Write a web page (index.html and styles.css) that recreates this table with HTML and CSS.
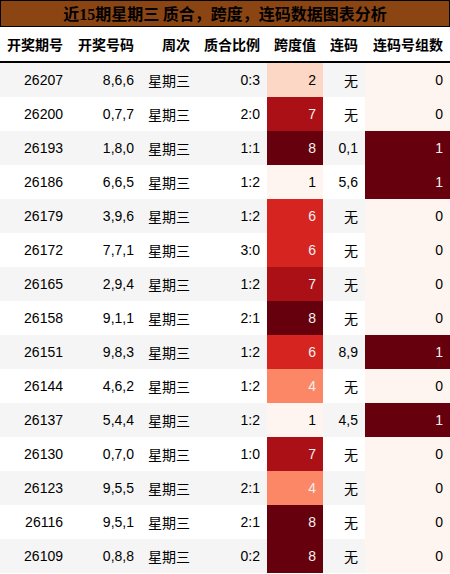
FILE: index.html
```html
<!DOCTYPE html>
<html lang="zh">
<head>
<meta charset="utf-8">
<link rel="stylesheet" href="styles.css">
</head>
<body>
<div class="title">近<span class="num">15</span>期星期三 质合，跨度，连码数据图表分析</div>
<table class="grid">
  <colgroup>
    <col class="c1"><col class="c2"><col class="c3"><col class="c4"><col class="c5"><col class="c6"><col class="c7">
  </colgroup>
  <thead>
    <tr><th>开奖期号</th><th>开奖号码</th><th>周次</th><th>质合比例</th><th>跨度值</th><th>连码</th><th>连码号组数</th></tr>
  </thead>
  <tbody>
    <tr><td>26207</td><td>8,6,6</td><td>星期三</td><td>0:3</td><td class="s2">2</td><td>无</td><td class="g0">0</td></tr>
    <tr><td>26200</td><td>0,7,7</td><td>星期三</td><td>2:0</td><td class="s7">7</td><td>无</td><td class="g0">0</td></tr>
    <tr><td>26193</td><td>1,8,0</td><td>星期三</td><td>1:1</td><td class="s8">8</td><td>0,1</td><td class="g1">1</td></tr>
    <tr><td>26186</td><td>6,6,5</td><td>星期三</td><td>1:2</td><td class="s1">1</td><td>5,6</td><td class="g1">1</td></tr>
    <tr><td>26179</td><td>3,9,6</td><td>星期三</td><td>1:2</td><td class="s6">6</td><td>无</td><td class="g0">0</td></tr>
    <tr><td>26172</td><td>7,7,1</td><td>星期三</td><td>3:0</td><td class="s6">6</td><td>无</td><td class="g0">0</td></tr>
    <tr><td>26165</td><td>2,9,4</td><td>星期三</td><td>1:2</td><td class="s7">7</td><td>无</td><td class="g0">0</td></tr>
    <tr><td>26158</td><td>9,1,1</td><td>星期三</td><td>2:1</td><td class="s8">8</td><td>无</td><td class="g0">0</td></tr>
    <tr><td>26151</td><td>9,8,3</td><td>星期三</td><td>1:2</td><td class="s6">6</td><td>8,9</td><td class="g1">1</td></tr>
    <tr><td>26144</td><td>4,6,2</td><td>星期三</td><td>1:2</td><td class="s4">4</td><td>无</td><td class="g0">0</td></tr>
    <tr><td>26137</td><td>5,4,4</td><td>星期三</td><td>1:2</td><td class="s1">1</td><td>4,5</td><td class="g1">1</td></tr>
    <tr><td>26130</td><td>0,7,0</td><td>星期三</td><td>1:0</td><td class="s7">7</td><td>无</td><td class="g0">0</td></tr>
    <tr><td>26123</td><td>9,5,5</td><td>星期三</td><td>2:1</td><td class="s4">4</td><td>无</td><td class="g0">0</td></tr>
    <tr><td>26116</td><td>9,5,1</td><td>星期三</td><td>2:1</td><td class="s8">8</td><td>无</td><td class="g0">0</td></tr>
    <tr><td>26109</td><td>0,8,8</td><td>星期三</td><td>0:2</td><td class="s8">8</td><td>无</td><td class="g0">0</td></tr>
  </tbody>
</table>
</body>
</html>
```
FILE: styles.css
```css
html, body {
  margin: 0;
  padding: 0;
  background: #ffffff;
}
body {
  width: 450px;
  font-family: "Liberation Sans", Arial, "Noto Sans CJK SC", sans-serif;
  color: #000;
}
.title {
  box-sizing: border-box;
  width: 450px;
  height: 27px;
  border: 1px solid #000;
  background: #8b4513;
  color: #000;
  font-family: "Noto Sans CJK SC", sans-serif;
  font-weight: bold;
  font-size: 16px;
  line-height: 24px;
  text-align: center;
}
.title .num {
  font-family: "Liberation Serif", "Times New Roman", serif;
  font-weight: bold;
}
.grid {
  width: 450px;
  table-layout: fixed;
  border-collapse: collapse;
  border-spacing: 0;
  font-size: 14px;
}
.c1 { width: 70px; }
.c2 { width: 71px; }
.c3 { width: 56px; }
.c4 { width: 70px; }
.c5 { width: 56px; }
.c6 { width: 42px; }
.c7 { width: 85px; }
.grid th, .grid td {
  padding: 0 7px 0 0;
  text-align: right;
  white-space: nowrap;
  overflow: hidden;
}
.grid th {
  height: 34px;
  font-weight: bold;
  font-family: "Noto Sans CJK SC", sans-serif;
  border-bottom: 2px solid #000;
  padding-top: 0;
}
.grid td {
  height: 34px;
  font-family: "Liberation Sans", Arial, "Noto Sans CJK SC", sans-serif;
}
.grid tbody tr:nth-child(odd) { background: #f5f5f5; }
.grid tbody tr:nth-child(even) { background: #ffffff; }

.s1 { background: #fff5f0; color: #000; }
.s2 { background: #fdd7c6; color: #000; }
.s4 { background: #fc8767; color: #f1f1f1; }
.s6 { background: #d62421; color: #f1f1f1; }
.s7 { background: #ab1016; color: #f1f1f1; }
.s8 { background: #67000d; color: #f1f1f1; }
.g0 { background: #fff5f0; color: #000; }
.g1 { background: #67000d; color: #f1f1f1; }
```
